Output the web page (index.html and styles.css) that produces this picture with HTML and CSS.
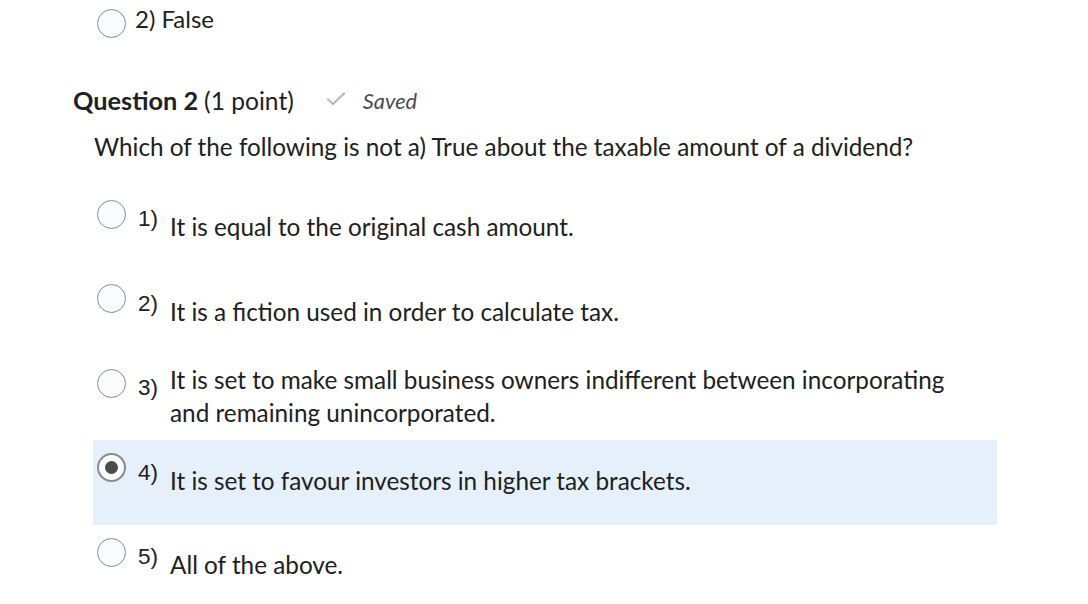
FILE: index.html
```html
<!DOCTYPE html>
<html>
<head>
<meta charset="utf-8">
<link rel="stylesheet" href="styles.css">
</head>
<body>
<div class="page">
  <div class="prev-option">
    <span class="radio"></span>
    <span class="prev-label">2) False</span>
  </div>

  <div class="q-header">
    <span class="q-title">Question 2</span>
    <span class="q-points">(1 point)</span>
    <span class="q-saved">
      <svg class="check" width="20" height="14" viewBox="0 0 20 14"><path d="M2 7.5 L7 12 L18 1.5" fill="none" stroke="#b5b9bc" stroke-width="2.2" stroke-linecap="round" stroke-linejoin="round"/></svg>
      <span class="saved-text">Saved</span>
    </span>
  </div>

  <div class="q-text">Which of the following is not a) True about the taxable amount of a dividend?</div>

  <div class="options">
    <div class="option">
      <span class="radio"></span>
      <span class="num">1)</span>
      <span class="opt-text">It is equal to the original cash amount.</span>
    </div>
    <div class="option">
      <span class="radio"></span>
      <span class="num">2)</span>
      <span class="opt-text">It is a fiction used in order to calculate tax.</span>
    </div>
    <div class="option">
      <span class="radio"></span>
      <span class="num">3)</span>
      <span class="opt-text">It is set to make small business owners indifferent between incorporating and remaining unincorporated.</span>
    </div>
    <div class="option selected">
      <span class="radio checked"></span>
      <span class="num">4)</span>
      <span class="opt-text">It is set to favour investors in higher tax brackets.</span>
    </div>
    <div class="option">
      <span class="radio"></span>
      <span class="num">5)</span>
      <span class="opt-text">All of the above.</span>
    </div>
  </div>
</div>
</body>
</html>
```

FILE: styles.css
```css
* { box-sizing: border-box; }
html, body { margin: 0; padding: 0; background: #ffffff; }
body {
  font-family: Lato, "Noto Sans", sans-serif;
  color: #202122;
  font-size: 24.3px;
}
.page { width: 1088px; height: 604px; overflow: hidden; }

.radio {
  flex: 0 0 auto;
  display: inline-block;
  width: 29px;
  height: 29px;
  border-radius: 50%;
  border: 1px solid #868c8f;
  background: #f9fbff;
  position: relative;
}
.radio.checked { border: 2px solid #868c8f; background: #f9fbff; }
.radio.checked::after {
  content: "";
  position: absolute;
  left: 50%; top: 50%;
  width: 13px; height: 13px;
  margin: -6.5px 0 0 -6.5px;
  border-radius: 50%;
  background: #494c4e;
}

.prev-option {
  display: flex;
  align-items: flex-start;
  padding: 9px 0 0 97px;
  height: 85px;
}
.prev-label {
  margin-left: 9px;
  line-height: 24px;
  margin-top: -2px;
  font-size: 24px;
}

.q-header {
  display: flex;
  align-items: center;
  padding-left: 73px;
  height: 30px;
}
.q-title { font-weight: 700; font-size: 25.3px; }
.q-points { margin-left: 6px; font-size: 24.6px; }
.q-saved { display: flex; align-items: center; margin-left: 32px; }
.check { margin-top: -2px; }
.saved-text {
  margin-left: 17px;
  font-style: italic;
  font-size: 21.8px;
  color: #494c4e;
}

.q-text {
  padding-left: 94px;
  margin-top: 17px;
  line-height: 30px;
  height: 30px;
}

.options {
  margin: 24.5px 0 0 93px;
  width: 904px;
}
.option {
  display: flex;
  align-items: flex-start;
  height: 84.5px;
  padding-left: 4px;
}
.option.selected { background: #e6f0fa; }
.option .radio { margin-top: 13px; }
.num {
  margin-left: 12px;
  margin-top: 20.5px;
  font-family: "Liberation Sans", Arial, sans-serif;
  font-size: 22.5px;
  line-height: 24px;
  width: 32px;
  flex: 0 0 auto;
}
.opt-text {
  align-self: center;
  line-height: 33px;
  max-width: 800px;
  margin-top: -4px;
}
```
